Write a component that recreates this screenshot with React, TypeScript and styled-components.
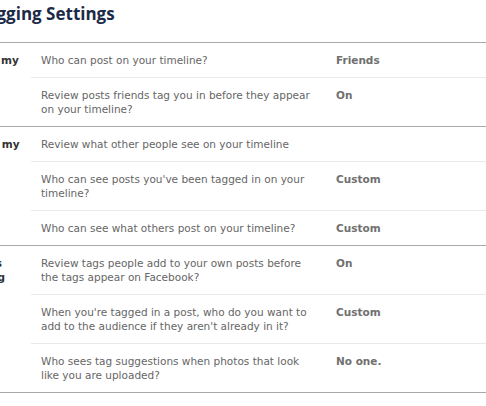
import { FC } from 'react';
import styled, { createGlobalStyle } from 'styled-components';

type SettingRow = {
  question: string;
  value?: string;
};

type SettingSection = {
  label: string[];
  rows: SettingRow[];
};

const SECTIONS: SettingSection[] = [
  {
    label: ['Who can add things to my', 'timeline?'],
    rows: [
      { question: 'Who can post on your timeline?', value: 'Friends' },
      {
        question:
          'Review posts friends tag you in before they appear on your timeline?',
        value: 'On',
      },
    ],
  },
  {
    label: ['Who can see things on my', 'timeline?'],
    rows: [
      { question: 'Review what other people see on your timeline' },
      {
        question: "Who can see posts you've been tagged in on your timeline?",
        value: 'Custom',
      },
      {
        question: 'Who can see what others post on your timeline?',
        value: 'Custom',
      },
    ],
  },
  {
    label: ['How can I manage tags', 'people add and tagging', 'suggestions?'],
    rows: [
      {
        question:
          'Review tags people add to your own posts before the tags appear on Facebook?',
        value: 'On',
      },
      {
        question:
          "When you're tagged in a post, who do you want to add to the audience if they aren't already in it?",
        value: 'Custom',
      },
      {
        question:
          'Who sees tag suggestions when photos that look like you are uploaded?',
        value: 'No one.',
      },
    ],
  },
];

const App: FC = () => {
  return (
    <Page>
      <GlobalStyle />
      <Content>
        <Title>Timeline and Tagging Settings</Title>
        <Table>
          {SECTIONS.map((section, i) => (
            <Section key={`section-${i}`}>
              <Label>
                {section.label.map((line, j) => (
                  <span key={j}>
                    {line}
                    {j < section.label.length - 1 && <br />}
                  </span>
                ))}
              </Label>
              <Rows>
                {section.rows.map((row, j) => (
                  <Row key={`row-${j}`}>
                    <Question>{row.question}</Question>
                    {row.value && <Value>{row.value}</Value>}
                  </Row>
                ))}
              </Rows>
            </Section>
          ))}
        </Table>
      </Content>
    </Page>
  );
};

export default App;

const GlobalStyle = createGlobalStyle`
  html, body {
    margin: 0;
    padding: 0;
    background: #ffffff;
  }
  body {
    font-family: "DejaVu Sans", "Open Sans", sans-serif;
    font-size: 10.5px;
  }
`;

const Page = styled.div`
  width: 486px;
  height: 406px;
  overflow: hidden;
  background: #ffffff;
`;

const Content = styled.div`
  margin-left: -166px;
  width: 652px;
`;

const Title = styled.h2`
  margin: 0;
  padding: 2px 0 0 28px;
  height: 42px;
  box-sizing: border-box;
  font-family: "Open Sans", "DejaVu Sans", sans-serif;
  font-size: 17px;
  font-weight: 700;
  color: #1c2a47;
  line-height: 24px;
  white-space: nowrap;
`;

const Table = styled.div`
  border-bottom: 1px solid #aaaaaa;
`;

const Section = styled.div`
  display: grid;
  grid-template-columns: 197px 1fr;
  border-top: 1px solid #aaaaaa;
`;

const Label = styled.div`
  padding: 10px 0 0 30px;
  font-weight: 700;
  color: #333333;
  line-height: 14px;
  white-space: nowrap;
`;

const Rows = styled.div`
  display: flex;
  flex-direction: column;
`;

const Row = styled.div`
  display: grid;
  grid-template-columns: 276px 1fr;
  column-gap: 19px;
  padding: 10px 0 10px 10px;
  line-height: 14px;

  & + & {
    border-top: 1px solid #e9e9e9;
  }
`;

const Question = styled.div`
  color: #666666;
`;

const Value = styled.div`
  color: #707070;
  font-weight: 700;
`;
